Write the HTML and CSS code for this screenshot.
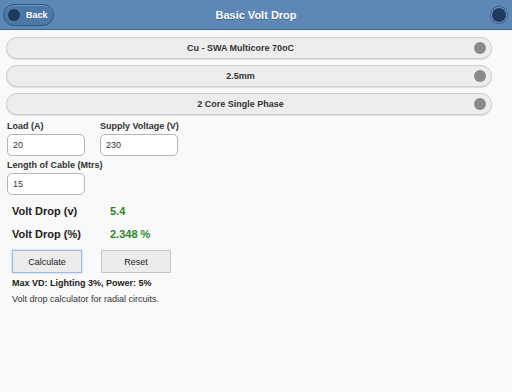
FILE: index.html
```html
<!DOCTYPE html>
<html lang="en">
<head>
    <meta charset="UTF-8">
    <meta name="viewport" content="width=device-width, initial-scale=1.0">
    <title>Basic Volt Drop</title>
    <link rel="stylesheet" href="styles.css">
</head>
<body>
    <div class="header">
        <button class="back-btn"><span class="dot"></span>Back</button>
        <h1>Basic Volt Drop</h1>
        <span class="menu-dot"></span>
    </div>

    <div class="content">
        <div class="select"><span>Cu - SWA Multicore 70oC</span><span class="knob"></span></div>
        <div class="select"><span>2.5mm</span><span class="knob"></span></div>
        <div class="select"><span>2 Core Single Phase</span><span class="knob"></span></div>

        <div class="fields">
            <div class="field">
                <label for="load">Load (A)</label>
                <input type="text" id="load" value="20">
            </div>
            <div class="field">
                <label for="voltage">Supply Voltage (V)</label>
                <input type="text" id="voltage" value="230">
            </div>
        </div>
        <div class="fields second">
            <div class="field">
                <label for="length">Length of Cable (Mtrs)</label>
                <input type="text" id="length" value="15">
            </div>
        </div>

        <div class="results">
            <div class="row"><span>Volt Drop (v)</span><span class="value">5.4</span></div>
            <div class="row"><span>Volt Drop (%)</span><span class="value">2.348 %</span></div>
        </div>

        <div class="actions">
            <button class="btn focused">Calculate</button>
            <button class="btn">Reset</button>
        </div>

        <p class="note">Max VD: Lighting 3%, Power: 5%</p>
        <p class="desc">Volt drop calculator for radial circuits.</p>
    </div>
</body>
</html>
```

FILE: styles.css
```css
body { margin: 0; font-family: "Liberation Sans", Arial, sans-serif; background: #f9f9f9; color: #222; }
.header { height: 29px; background: #5d88b5; border-bottom: 1px solid #3f6590; display: grid; grid-template-columns: 1fr auto 1fr; align-items: center; }
.header h1 { margin: 0; font-size: 11px; font-weight: bold; color: #fff; text-shadow: 0 1px 0 #3e6590; }
.back-btn { justify-self: start; margin-left: 3px; height: 22px; width: 51px; padding: 0 0 0 4px; display: flex; align-items: center; gap: 6px; background: #4c78a6; border: 1px solid #2f557e; border-radius: 11px; color: #fff; font-family: inherit; font-size: 9px; font-weight: bold; box-shadow: inset 0 1px 0 #6d95c0; }
.dot { width: 12px; height: 12px; border-radius: 50%; background: #1e3a5e; }
.menu-dot { justify-self: end; width: 14px; height: 14px; margin-right: 5px; border-radius: 50%; background: #1e3a5e; border: 1px solid #6f9acb; box-shadow: 0 0 0 1px #3a628d; }

.content { padding: 7px 6px 0 6px; }
.select { height: 20px; margin-bottom: 6px; width: 484px; display: flex; align-items: center; background: #ededed; border: 1px solid #d0d0d0; border-radius: 11px; box-shadow: 0 1px 1px #dcdcdc; font-size: 9px; font-weight: bold; color: #333; }
.select span:first-child { flex: 1; text-align: center; }
.knob { width: 12px; height: 12px; margin-right: 5px; border-radius: 50%; background: #8a8a8a; }

.fields { display: flex; gap: 15px; padding-left: 1px; }
.field { display: flex; flex-direction: column; }
.field label { font-size: 9px; line-height: 10px; font-weight: bold; color: #333; margin: 0 0 3px 0; }
.field input { width: 78px; height: 22px; box-sizing: border-box; padding: 0 5px; border: 1px solid #b5b5b5; border-radius: 5px; background: #fff; font-family: inherit; font-size: 9px; color: #333; }
.second .field label { margin-top: 4px; }

.results { display: flex; flex-direction: column; gap: 10px; margin: 10px 0 0 6px; }
.row { display: flex; font-size: 11px; line-height: 13px; font-weight: bold; color: #222; }
.row span:first-child { width: 98px; }
.row .value { color: #2a8a2a; }

.actions { display: flex; gap: 19px; margin: 9px 0 0 6px; }
.btn { width: 70px; height: 23px; background: #ececec; border: 1px solid #c8c8c8; font-family: inherit; font-size: 9px; color: #222; }
.btn.focused { border-color: #9fb8d3; box-shadow: 0 0 2px #a8c2dc; }

.note { margin: 5px 0 0 6px; font-size: 9px; line-height: 10px; font-weight: bold; color: #222; }
.desc { margin: 6px 0 0 6px; font-size: 9px; line-height: 10px; color: #333; }
```
